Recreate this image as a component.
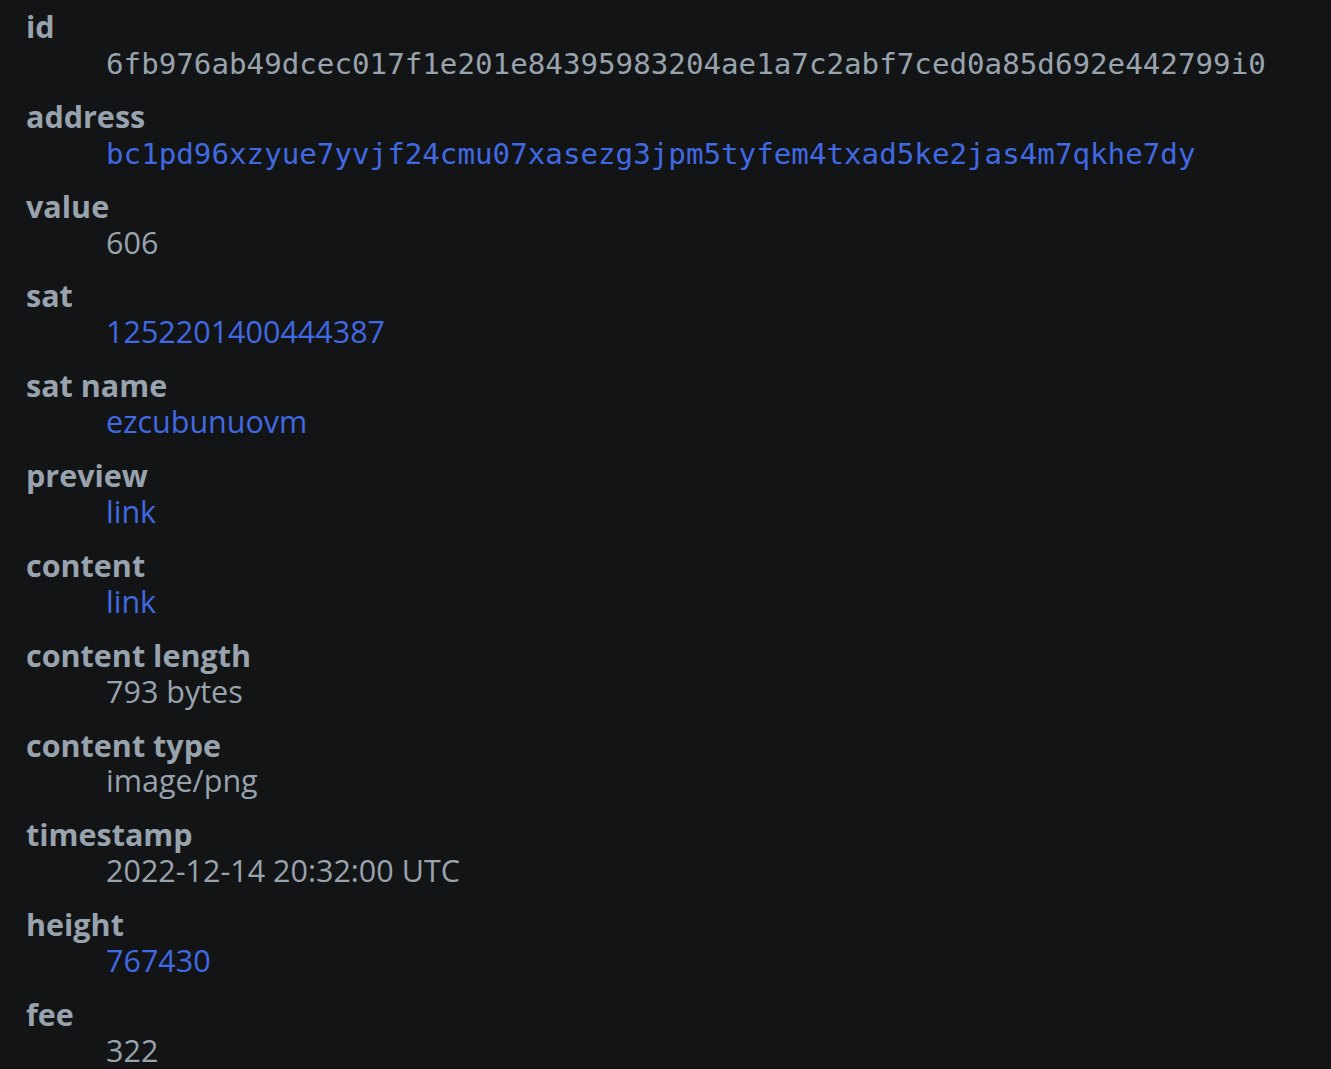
import React from "react";

type Row = { label: string; value: string; link?: boolean; mono?: boolean };

const rows: Row[] = [
  { label: "id", value: "6fb976ab49dcec017f1e201e84395983204ae1a7c2abf7ced0a85d692e44279" + "9i0", mono: true },
  { label: "address", value: "bc1pd96xzyue7yvjf24cmu07xasezg3jpm5tyfem4txad5ke2jas4m7qkhe7dy", mono: true, link: true },
  { label: "value", value: "606" },
  { label: "sat", value: "1252201400444387", link: true },
  { label: "sat name", value: "ezcubunuovm", link: true },
  { label: "preview", value: "link", link: true },
  { label: "content", value: "link", link: true },
  { label: "content length", value: "793 bytes" },
  { label: "content type", value: "image/png" },
  { label: "timestamp", value: "2022-12-14 20:32:00 UTC" },
  { label: "height", value: "767430", link: true },
  { label: "fee", value: "322" },
];

export default function App() {
  return (
    <div
      className="min-h-screen bg-[#131416] text-[#98a3ad] pl-[26px] pt-[9px]"
      style={{ fontFamily: '"Open Sans", "Noto Sans", sans-serif' }}
    >
      <dl className="text-[30.5px] leading-[35.9px] [overflow-wrap:anywhere]">
        {rows.map((r, i) => (
          <React.Fragment key={r.label}>
            <dt className={`font-bold ${i === 0 ? "" : "mt-[18px]"}`}>{r.label}</dt>
            <dd className="ml-[80px]">
              {r.mono ? (
                <span
                  className={`text-[29.2px] leading-[30px] ${r.link ? "text-[#4169e1]" : ""}`}
                  style={{ fontFamily: '"DejaVu Sans Mono", "Liberation Mono", monospace' }}
                >
                  {r.value}
                </span>
              ) : r.link ? (
                <a className="text-[#4169e1]">{r.value}</a>
              ) : (
                <span>{r.value}</span>
              )}
            </dd>
          </React.Fragment>
        ))}
      </dl>
    </div>
  );
}
